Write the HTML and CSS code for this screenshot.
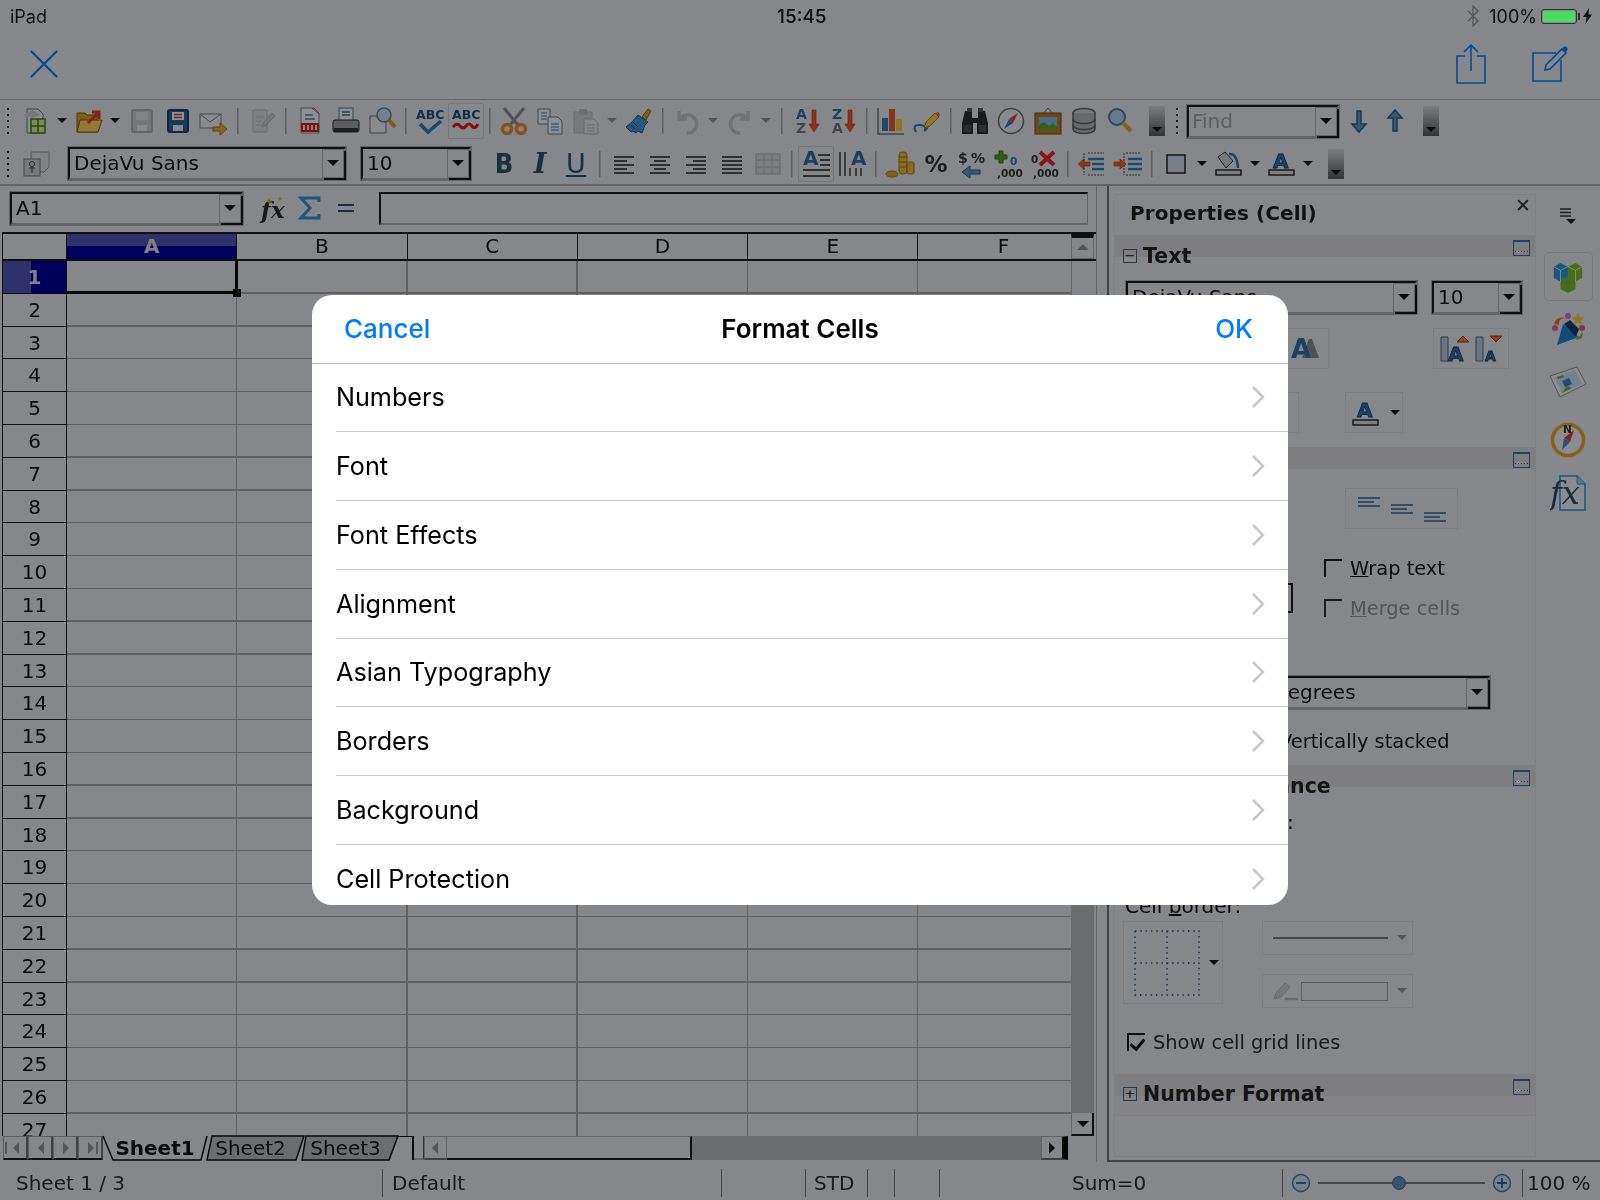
FILE: index.html
```html
<!DOCTYPE html>
<html lang="en">
<head>
    <meta name="viewport" content="width=device-width, initial-scale=1.0">
    <title>Format Cells</title>
    <link rel="stylesheet" href="styles.css">
</head>
<body>
    <header class="statusBar">
        <span class="device">iPad</span>
        <span class="clock">15:45</span>
        <div class="sysTray">
            <svg class="bluetooth" width="14" height="22" viewBox="0 0 14 22"><path d="M2 6l10 10-5 5V1l5 5L2 16" fill="none" stroke="#555" stroke-width="1.3"/></svg>
            <span>100%</span>
            <span class="battery"><i></i></span>
            <svg class="bolt" width="9" height="16" viewBox="0 0 9 16"><path d="M6 0L0 9h3.500L2.500 16 9 6.500H5.500z" fill="#111"/></svg>
        </div>
    </header>

    <nav class="navBar">
        <svg width="28" height="28" viewBox="0 0 28 28"><path d="M1 1l26 26M27 1L1 27" stroke="#007aff" stroke-width="2" fill="none"/></svg>
        <div class="navRight">
            <svg width="30" height="40" viewBox="0 0 30 40"><path d="M9 12H1v27h28V12h-8M15 27V1M8 8l7-7 7 7" stroke="#007aff" stroke-width="1.600" fill="none"/></svg>
            <svg width="36" height="36" viewBox="0 0 36 36"><path d="M24 7H1v28h28V14" stroke="#007aff" stroke-width="1.600" fill="none"/><path d="M13 24l1-5L30 3l4 4-16 16z" stroke="#007aff" stroke-width="1.600" fill="none"/><circle cx="33" cy="3" r="2.500" fill="#007aff"/></svg>
        </div>
    </nav>

    <div class="office">
        <div class="toolbar rowOne">
            <span class="grip"></span>
            <svg class="tb" viewBox="0 0 28 28"><path d="M5 2h11l5 5v19H5z" fill="#e8eaef" stroke="#6d6f75"/><path d="M1 8l9-5 9 5-9 3z" fill="#c5c8d0"/><rect x="9" y="12" width="14" height="14" fill="#dde78c" stroke="#3b7d1c" stroke-width="1.500"/><path d="M16 12v14M9 19h14" stroke="#3b7d1c" stroke-width="1.500"/></svg>
            <i class="dd"></i>
            <svg class="tb" viewBox="0 0 28 28"><path d="M2 25V6h8l2 2h10v17z" fill="#d89a2e" stroke="#84540c"/><path d="M2 25l3-12h22l-4 12z" fill="#f5c95c" stroke="#84540c"/><path d="M13 16L23 6m-6-1h7v7" fill="none" stroke="#d03c18" stroke-width="3"/></svg>
            <i class="dd"></i>
            <svg class="tb" viewBox="0 0 28 28"><rect x="4" y="3" width="20" height="22" rx="2" fill="#c4c5cb" stroke="#a8a9af" stroke-width="2"/><rect x="8" y="5" width="12" height="8" fill="#d9dae0"/><rect x="9" y="18" width="10" height="6" fill="#e3e4ea"/></svg>
            <svg class="tb" viewBox="0 0 28 28"><rect x="4" y="3" width="20" height="22" rx="2" fill="#2c6296" stroke="#18406c" stroke-width="2"/><rect x="8" y="5" width="12" height="8" fill="#eef"/><path d="M10 7.500h8M10 10.500h8" stroke="#d13a3a" stroke-width="1.500"/><rect x="9" y="18" width="10" height="6" fill="#dfe4ec"/></svg>
            <svg class="tb" viewBox="0 0 28 28"><rect x="0" y="7" width="21" height="14" fill="#e4e6ec" stroke="#777a80"/><path d="M0 7l10 8 11-8" fill="none" stroke="#777a80"/><path d="M13 20h7v-4l7 6-7 6v-4h-7z" fill="#eda62c" stroke="#a86a10"/></svg>
            <i class="sep"></i>
            <svg class="tb" viewBox="0 0 28 28"><path d="M5 3h14v22H5z" fill="#d5d6dc" stroke="#aeb0b6"/><path d="M8 10h8M8 14h6M8 18h6" stroke="#b5b6bc"/><path d="M14 20l2-5 8-9 3 3-9 9z" fill="#c7c8ce" stroke="#a8a9af"/></svg>
            <i class="sep"></i>
            <svg class="tb" viewBox="0 0 28 28"><path d="M5 1h13l5 5v20H5z" fill="#eceef3" stroke="#7e8086"/><path d="M9 8h8M9 12h10" stroke="#3779b4" stroke-width="1.500"/><path d="M16 1l7 6" stroke="#d33"/><rect x="5" y="16" width="18" height="9" fill="#cf1e1e"/><path d="M8 18v5M12 18v5M16 18v5M20 18v5" stroke="#f3d5d5" stroke-width="2"/></svg>
            <svg class="tb" viewBox="0 0 28 28"><rect x="7" y="1" width="14" height="13" fill="#eef0f5" stroke="#6f7177"/><path d="M10 5h8M10 8h8" stroke="#2f6fa8" stroke-width="1.500"/><rect x="1" y="13" width="26" height="12" rx="2" fill="#9a9ba1" stroke="#2a2b30"/><rect x="2" y="21" width="24" height="4" fill="#303136"/><circle cx="22" cy="18" r="1.500" fill="#5ec04a"/></svg>
            <svg class="tb" viewBox="0 0 28 28"><path d="M2 9h16v17H2z" fill="#e4e6ec" stroke="#6f7177"/><circle cx="16" cy="8" r="7" fill="#bdd8ee" stroke="#71777f" stroke-width="1.500"/><path d="M21 13l6 7" stroke="#d09a24" stroke-width="4"/></svg>
            <i class="sep"></i>
            <svg class="tb" viewBox="0 0 28 28"><text x="0" y="12" class="svgAbc" fill="#1d4f80">ABC</text><path d="M4 17l8 8 13-11" fill="none" stroke="#2d78b8" stroke-width="3.500"/></svg>
            <span class="toggled"><svg class="tb" viewBox="0 0 28 28"><text x="0" y="12" class="svgAbc" fill="#1d4f80">ABC</text><path d="M1 20q4-5 7-1t6 0 6 0 6-2" fill="none" stroke="#d01c1c" stroke-width="3"/></svg></span>
            <i class="sep"></i>
            <svg class="tb" viewBox="0 0 28 28"><path d="M4 1l14 17M24 1L10 18" stroke="#85878d" stroke-width="3"/><circle cx="7" cy="22" r="4.500" fill="none" stroke="#e1892c" stroke-width="3.500"/><circle cx="21" cy="22" r="4.500" fill="none" stroke="#e1892c" stroke-width="3.500"/></svg>
            <svg class="tb" viewBox="0 0 28 28"><path d="M2 2h12v15H2z" fill="#eef0f5" stroke="#74767c"/><path d="M5 6h6M5 9h6M5 12h6" stroke="#2f78b5"/><path d="M12 10h10l4 4v13H12z" fill="#eef0f5" stroke="#74767c"/><path d="M15 17h8M15 20h8M15 23h8" stroke="#2f78b5"/></svg>
            <svg class="tb" viewBox="0 0 28 28"><rect x="2" y="5" width="18" height="21" fill="#c9cacf" stroke="#aeafb5"/><rect x="7" y="2" width="8" height="6" fill="#b7b8be"/><path d="M12 12h10l4 4v11H12z" fill="#dfe0e5" stroke="#aeafb5"/><path d="M15 18h8M15 21h8M15 24h8" stroke="#b3b4ba"/></svg>
            <i class="dd grey"></i>
            <svg class="tb" viewBox="0 0 28 28"><path d="M17 10l6-8 3 2-5 9z" fill="#d39a24" stroke="#8a6210"/><path d="M13 8l10 7-3 3-3 8-4-2-2 2-3-2-2 1-5-5 6-5z" fill="#3d8fd3" stroke="#1f5a90"/><path d="M8 15l5 5M6 18l4 4" stroke="#1f5a90"/></svg>
            <i class="sep"></i>
            <svg class="tb" viewBox="0 0 28 28"><path d="M6 4v8h8M7 12A9 9 0 1 1 14 26" fill="none" stroke="#bdbec4" stroke-width="3.500"/></svg>
            <i class="dd grey"></i>
            <svg class="tb" viewBox="0 0 28 28"><path d="M22 4v8h-8M21 12A9 9 0 1 0 14 26" fill="none" stroke="#bdbec4" stroke-width="3.500"/></svg>
            <i class="dd grey"></i>
            <i class="sep wide"></i>
            <svg class="tb" viewBox="0 0 28 28"><text x="3" y="12" class="svgLetter" fill="#2c6fb0">A</text><text x="3" y="26" class="svgLetter" fill="#73757b">Z</text><path d="M19 3v14h-3l5 8 5-8h-3V3z" fill="#e4572a" stroke="#a83410" stroke-width=".6"/></svg>
            <svg class="tb" viewBox="0 0 28 28"><text x="3" y="12" class="svgLetter" fill="#2c6fb0">Z</text><text x="3" y="26" class="svgLetter" fill="#73757b">A</text><path d="M19 3v14h-3l5 8 5-8h-3V3z" fill="#e4572a" stroke="#a83410" stroke-width=".6"/></svg>
            <i class="sep"></i>
            <svg class="tb" viewBox="0 0 28 28"><path d="M1 1v26h26" fill="none" stroke="#6f7177" stroke-width="1.500"/><rect x="5" y="11" width="6" height="13" fill="#2f78b5"/><rect x="12" y="2" width="6" height="22" fill="#dc5a22"/><rect x="19" y="12" width="6" height="12" fill="#ecc23a"/></svg>
            <svg class="tb" viewBox="0 0 28 28"><path d="M3 25q-4-7 3-7t6 4 3-2" fill="none" stroke="#2f78b5" stroke-width="2"/><path d="M11 21l2-6 9-9 4 4-9 9z" fill="#f0c840" stroke="#9a7a14"/><path d="M22 6l4 4 1-3-2-2z" fill="#e56a5a"/></svg>
            <i class="sep"></i>
            <svg class="tb" viewBox="0 0 28 28"><path d="M4 4h7v7h6V4h7l3 12v11H16V16h-4v11H1V16z" fill="#2c2d32"/><rect x="6" y="1" width="5" height="4" fill="#55565c"/><rect x="17" y="1" width="5" height="4" fill="#55565c"/><rect x="3" y="18" width="7" height="7" fill="#4b4c52"/><rect x="18" y="18" width="7" height="7" fill="#4b4c52"/></svg>
            <svg class="tb" viewBox="0 0 28 28"><circle cx="14" cy="14" r="12.500" fill="#e5e7ec" stroke="#686a70" stroke-width="1.500"/><path d="M21 6l-5 10-4-4z" fill="#d83a2e"/><path d="M7 22l5-10 4 4z" fill="#2f78c8"/></svg>
            <svg class="tb wideIcon" viewBox="0 0 28 28"><path d="M9 7l5-6 5 6" fill="none" stroke="#6b6d73"/><rect x="1" y="6" width="26" height="21" fill="#b27a1e" stroke="#6e470c"/><rect x="5" y="10" width="18" height="13" fill="#7cb4e4"/><path d="M5 23v-5l5-3 5 4 4-3 4 4v3z" fill="#5e9c32"/></svg>
            <svg class="tb" viewBox="0 0 28 28"><ellipse cx="14" cy="6" rx="11" ry="4.500" fill="#c9cad0" stroke="#5f6066" stroke-width="1.500"/><path d="M3 6v16c0 6 22 6 22 0V6" fill="#aeafb5" stroke="#5f6066" stroke-width="1.500"/><path d="M3 12c0 6 22 6 22 0M3 18c0 6 22 6 22 0" fill="none" stroke="#5f6066" stroke-width="1.500"/></svg>
            <svg class="tb" viewBox="0 0 28 28"><circle cx="11" cy="10" r="8" fill="#a9cde9" stroke="#5a7792" stroke-width="2"/><path d="M17 16l8 8" stroke="#d8a12a" stroke-width="4.500"/></svg>
            <span class="overflow"></span>
            <span class="grip inRow"></span>
            <div class="combo findBox"><span class="comboText muted">Find</span><b class="comboBtn"></b></div>
            <svg class="tb" viewBox="0 0 28 28"><path d="M12 4h4v13h5l-7 8-7-8h5z" fill="#5a94c8" stroke="#2c5c88" stroke-width="1.500"/></svg>
            <svg class="tb" viewBox="0 0 28 28"><path d="M12 24h4V11h5l-7-8-7 8h5z" fill="#5a94c8" stroke="#2c5c88" stroke-width="1.500"/></svg>
            <span class="overflow last"></span>
        </div>

        <div class="toolbar rowTwo">
            <span class="grip"></span>
            <svg class="tb" viewBox="0 0 28 28"><path d="M9 2h18v15l-5 5H9z" fill="#d9dae0" stroke="#8e9096"/><rect x="2" y="9" width="16" height="17" fill="#c9cad0" stroke="#6f7177"/><circle cx="10" cy="14" r="2.500" fill="none" stroke="#444"/><path d="M10 16v7M7 18h6" stroke="#444"/></svg>
            <div class="combo fontBox"><span class="comboText">DejaVu Sans</span><b class="comboBtn"></b></div>
            <div class="combo sizeBox"><span class="comboText">10</span><b class="comboBtn"></b></div>
            <span class="fmt bold">B</span>
            <span class="fmt ital">I</span>
            <span class="fmt under">U</span>
            <i class="sep"></i>
            <svg class="tb" viewBox="0 0 28 28"><path d="M4 7h20M4 11h13M4 15h20M4 19h13M4 23h20" stroke="#222" stroke-width="1.600"/></svg>
            <svg class="tb" viewBox="0 0 28 28"><path d="M4 7h20M8 11h12M4 15h20M8 19h12M4 23h20" stroke="#222" stroke-width="1.600"/></svg>
            <svg class="tb" viewBox="0 0 28 28"><path d="M4 7h20M11 11h13M4 15h20M11 19h13M4 23h20" stroke="#222" stroke-width="1.600"/></svg>
            <svg class="tb" viewBox="0 0 28 28"><path d="M4 7h20M4 11h20M4 15h20M4 19h20M4 23h20" stroke="#222" stroke-width="1.600"/></svg>
            <svg class="tb" viewBox="0 0 28 28"><path d="M2 4h24v20H2zM2 10h24M2 17h24M10 4v20M18 4v20" fill="#d3d4da" stroke="#b8b9bf" stroke-width="1.300"/></svg>
            <i class="sep"></i>
            <span class="toggled"><svg class="tb" viewBox="0 0 28 28"><text x="1" y="15" class="svgLetter big" fill="#2d6ca6">A</text><path d="M16 5h12M18 10h10M18 15h10M1 20h27M1 26h27" stroke="#222" stroke-width="1.300"/></svg></span>
            <svg class="tb" viewBox="0 0 28 28"><text x="13" y="15" class="svgLetter big" fill="#2d6ca6">A</text><path d="M2 2v24M7 2v24M12 18v8M18 18v8M23 18v8" stroke="#222" stroke-width="1.300"/></svg>
            <i class="sep"></i>
            <svg class="tb" viewBox="0 0 28 28"><rect x="13" y="2" width="8" height="22" rx="3" fill="#e5b23a" stroke="#9c7212"/><rect x="21" y="12" width="7" height="12" rx="2" fill="#e5b23a" stroke="#9c7212"/><ellipse cx="6" cy="24" rx="6" ry="3" fill="#d9a02c" stroke="#9c7212"/><path d="M13 7h8M13 12h8M13 17h8" stroke="#9c7212"/></svg>
            <span class="fmt percent">%</span>
            <svg class="tb" viewBox="0 0 28 28"><text x="0" y="13" class="svgLetter" fill="#333">$</text><text x="13" y="13" class="svgLetter" fill="#333">%</text><path d="M4 22l8-6v4h10v4H12v4z" fill="#5a94c8" stroke="#2c5c88"/></svg>
            <svg class="tb" viewBox="0 0 28 28"><path d="M5 1h4v4h4v4H9v4H5V9H1V5h4z" fill="#4fa12a" stroke="#2d6c10"/><text x="16" y="15" class="svgSmall" fill="#2f6fc0">0</text><text x="3" y="27" class="svgSmall" fill="#333">,000</text></svg>
            <svg class="tb" viewBox="0 0 28 28"><text x="1" y="13" class="svgSmall" fill="#333">0</text><path d="M10 2l14 13M24 2L10 15" stroke="#e0262a" stroke-width="4"/><text x="3" y="27" class="svgSmall" fill="#333">,000</text></svg>
            <i class="sep"></i>
            <svg class="tb" viewBox="0 0 28 28"><path d="M10 9h16M14 14h12M14 19h12" stroke="#2f78b5" stroke-width="2.500"/><path d="M6 3v22M10 3h16M10 25h16" stroke="#444" stroke-dasharray="2 1" fill="none"/><path d="M0 14l6-5v3h6v4H6v3z" fill="#e2622a" stroke="#a83410" stroke-width=".6"/></svg>
            <svg class="tb" viewBox="0 0 28 28"><path d="M14 9h14M14 14h14M14 19h14" stroke="#2f78b5" stroke-width="2.500"/><path d="M10 3v22M12 3h14M12 25h14" stroke="#444" stroke-dasharray="2 1" fill="none"/><path d="M12 14l-6-5v3H0v4h6v3z" fill="#e2622a" stroke="#a83410" stroke-width=".6"/></svg>
            <i class="sep"></i>
            <svg class="tb" viewBox="0 0 28 28"><rect x="5" y="5" width="18" height="18" fill="#cbd2e0" stroke="#222" stroke-width="1.500"/></svg>
            <i class="dd"></i>
            <svg class="tb" viewBox="0 0 28 28"><path d="M3 7l7-5 8 9-7 7z" fill="#c9cad0" stroke="#333"/><path d="M14 4q8-1 9 14" fill="none" stroke="#2c6fb0" stroke-width="2.500"/><rect x="1" y="20" width="25" height="5" fill="#d5d6dc" stroke="#111" stroke-width="1.300"/></svg>
            <i class="dd"></i>
            <svg class="tb" viewBox="0 0 28 28"><text x="5" y="18" class="svgLetter big" fill="#2c6fb0" stroke="#173e66" stroke-width=".8">A</text><rect x="1" y="20" width="25" height="5" fill="#d5d6dc" stroke="#111" stroke-width="1.300"/></svg>
            <i class="dd"></i>
            <span class="overflow"></span>
        </div>

        <div class="workspace">
            <div class="leftPane">
                <div class="formulaBar">
                    <div class="combo nameBox"><span class="comboText">A1</span><b class="comboBtn"></b></div>
                    <svg class="tb" viewBox="0 0 28 28"><text x="1" y="24" class="svgFx" fill="#2b2b2b">fx</text><path d="M9 4l1 2 2 1-2 1-1 2-1-2-2-1 2-1zM20 2l1 2 2 .500-2 1-1 2-1-2-2-1 2-.500z" fill="#e0b020"/></svg>
                    <svg class="tb" viewBox="0 0 28 28"><path d="M23 8V4H5l9 10-9 10h18v-4" fill="none" stroke="#2f8fc8" stroke-width="3"/></svg>
                    <svg class="tb" viewBox="0 0 28 28"><path d="M6 11h16M6 17h16" stroke="#2c4e6e" stroke-width="2.200"/></svg>
                    <div class="formulaInput"></div>
                </div>

                <div class="sheet">
                    <div class="colHeads">
                        <div class="corner"></div>
                        <div class="colHead picked">A</div>
                        <div class="colHead">B</div>
                        <div class="colHead">C</div>
                        <div class="colHead">D</div>
                        <div class="colHead">E</div>
                        <div class="colHead lastCol">F</div>
                        <div class="scrollUp"><i class="arrow up"></i></div>
                    </div>
                    <div class="sheetBody">
                        <div class="rowHeads">
                            <div class="rowHead picked">1</div><div class="rowHead">2</div><div class="rowHead">3</div>
                            <div class="rowHead">4</div><div class="rowHead">5</div><div class="rowHead">6</div>
                            <div class="rowHead">7</div><div class="rowHead">8</div><div class="rowHead">9</div>
                            <div class="rowHead">10</div><div class="rowHead">11</div><div class="rowHead">12</div>
                            <div class="rowHead">13</div><div class="rowHead">14</div><div class="rowHead">15</div>
                            <div class="rowHead">16</div><div class="rowHead">17</div><div class="rowHead">18</div>
                            <div class="rowHead">19</div><div class="rowHead">20</div><div class="rowHead">21</div>
                            <div class="rowHead">22</div><div class="rowHead">23</div><div class="rowHead">24</div>
                            <div class="rowHead">25</div><div class="rowHead">26</div><div class="rowHead">27</div>
                        </div>
                        <div class="cells"><div class="cursor"><i></i></div></div>
                        <div class="vScroll">
                            <div class="vThumb"></div>
                            <div class="vDown"><i class="arrow down"></i></div>
                        </div>
                    </div>
                    <div class="sheetFoot">
                        <div class="tabNav">
                            <span><i class="arrow left barred"></i></span>
                            <span><i class="arrow left"></i></span>
                            <span><i class="arrow right"></i></span>
                            <span><i class="arrow right barred"></i></span>
                        </div>
                        <div class="tab current">
                            <svg viewBox="0 0 104 24" preserveAspectRatio="none"><path d="M0 0l10 24h88l6-24" fill="none" stroke="#111" stroke-width="1.500"/></svg>
                            <span>Sheet1</span>
                        </div>
                        <div class="tab">
                            <svg viewBox="0 0 95 24" preserveAspectRatio="none"><path d="M0 24L5 0h92l-8 24z" fill="#b5b6bc" stroke="#111" stroke-width="1.500"/></svg>
                            <span>Sheet2</span>
                        </div>
                        <div class="tab">
                            <svg viewBox="0 0 95 24" preserveAspectRatio="none"><path d="M0 24L4 0h92l-9 24z" fill="#b5b6bc" stroke="#111" stroke-width="1.500"/></svg>
                            <span>Sheet3</span>
                        </div>
                        <div class="tabRest"></div>
                        <div class="splitter"></div>
                        <div class="hBtn"><i class="arrow left"></i></div>
                        <div class="hThumb"></div>
                        <div class="hTrack"></div>
                        <div class="hBtn end"><i class="arrow right dark"></i></div>
                    </div>
                </div>
            </div>

            <aside class="sidebar">
                <div class="deck">
                    <div class="deckTitle">Properties (Cell)<span class="deckClose">&#10005;</span></div>

                    <div class="secHead"><i class="fold">&minus;</i>Text<i class="more"></i></div>
                    <div class="panelRow fontRow">
                        <div class="combo sideFont"><span class="comboText">DejaVu Sans</span><b class="comboBtn"></b></div>
                        <div class="combo sideSize"><span class="comboText">10</span><b class="comboBtn"></b></div>
                    </div>
                    <div class="panelRow aaRow">
                        <div class="btnBox aaBox">
                            <svg width="36" height="32" viewBox="0 0 36 32"><path d="M16 25l7-19h3l7 19z" fill="#85878d"/><text x="5" y="25" class="svgAa" fill="#2d6ca6">A</text></svg>
                        </div>
                        <div class="btnBox growBox">
                            <svg width="30" height="30" viewBox="0 0 30 30"><path d="M1 3h7v24H1z" fill="#b5c3d2" stroke="#47678a"/><text x="8" y="27" class="svgLetter big" fill="#2d6ca6" stroke="#173e66" stroke-width=".8">A</text><path d="M17 8l6-6 6 6z" fill="#e2822a" stroke="#a83410"/></svg>
                            <svg width="28" height="30" viewBox="0 0 28 30"><path d="M1 3h7v24H1z" fill="#b5c3d2" stroke="#47678a"/><text x="10" y="27" class="svgLetter" fill="#2d6ca6" stroke="#173e66" stroke-width=".8">A</text><path d="M15 2l6 6 6-6z" fill="#e2622a" stroke="#a83410"/></svg>
                        </div>
                    </div>
                    <div class="panelRow colorRow">
                        <div class="btnBox stubBox"></div>
                        <div class="btnBox fontColorBox">
                            <svg width="28" height="32" viewBox="0 0 28 32"><text x="5" y="20" class="svgLetter big" fill="#2c6fb0" stroke="#173e66" stroke-width=".8">A</text><rect x="1" y="23" width="25" height="5" fill="#d5d6dc" stroke="#111" stroke-width="1.300"/></svg>
                            <i class="dd"></i>
                        </div>
                    </div>

                    <div class="secHead short"><i class="fold">&minus;</i>Alignment<i class="more"></i></div>
                    <div class="panelRow valignRow">
                        <div class="btnBox valignBox">
                            <svg width="24" height="30" viewBox="0 0 24 30"><path d="M1 4h22M1 8h16M1 12h22" stroke="#2f5f92" stroke-width="1.300"/></svg>
                            <svg width="24" height="30" viewBox="0 0 24 30"><path d="M1 11h22M1 15h16M1 19h22" stroke="#2f5f92" stroke-width="1.300"/></svg>
                            <svg width="24" height="30" viewBox="0 0 24 30"><path d="M1 19h22M1 23h16M1 27h22" stroke="#2f5f92" stroke-width="1.300"/></svg>
                        </div>
                    </div>
                    <div class="alignMid">
                        <div class="indentEdge"></div>
                        <div class="checks">
                            <label class="check"><i class="cb"></i><span><u>W</u>rap text</span></label>
                            <label class="check off"><i class="cb"></i><span><u>M</u>erge cells</span></label>
                        </div>
                    </div>
                    <div class="combo degreeBox"><span class="comboText">0 degrees</span><b class="comboBtn"></b></div>
                    <div class="stacked">Vertically stacked</div>

                    <div class="secHead appearance"><i class="fold">&minus;</i>Cell Appearance<i class="more"></i></div>
                    <div class="plainLabel bgLabel">Cell background:</div>
                    <div class="plainLabel borderLabel">Cell <u>b</u>order:</div>
                    <div class="borderRow">
                        <div class="btnBox gridBox">
                            <svg width="66" height="66" viewBox="0 0 66 66"><path d="M1 1h64v64H1zM33 1v64M1 33h64" fill="none" stroke="#2f4f78" stroke-width="1.500" stroke-dasharray="1.500 3.800"/></svg>
                            <i class="dd"></i>
                        </div>
                        <div class="borderTools">
                            <div class="btnBox toolBox"><span class="lineSample"></span><i class="dd grey"></i></div>
                            <div class="btnBox toolBox">
                                <svg width="26" height="20" viewBox="0 0 26 20"><path d="M1 18l2-6 9-10 5 4-9 10z" fill="#c7c8ce" stroke="#aeafb5"/><path d="M12 18h13" stroke="#b0b1b7" stroke-width="2.500"/></svg>
                                <span class="colorSample"></span><i class="dd grey"></i>
                            </div>
                        </div>
                    </div>
                    <label class="check gridCheck"><i class="cb on"></i><span>Show cell <u>g</u>rid lines</span></label>

                    <div class="secHead last"><i class="fold">+</i>Number Format<i class="more"></i></div>
                </div>

                <div class="sideTabs">
                    <svg class="sideMenu" width="16" height="16" viewBox="0 0 16 16"><path d="M0 1h11M0 4.500h11M0 8h11" stroke="#333" stroke-width="1.300"/><path d="M6 11h10l-5 5z" fill="#222"/></svg>
                    <div class="sideTab picked">
                        <svg width="32" height="34" viewBox="0 0 34 34"><path d="M2 6l7-4 8 4v12l-8 4-7-4z" fill="#2893d4"/><path d="M17 6l8-4 7 4v12l-7 4-8-4z" fill="#75b82c"/><path d="M9 20l8-3 8 3v10l-8 4-8-4z" fill="#75b82c"/><path d="M2 6l7 4 8-4M17 6l8 4 7-4M9 10v12M25 10v12" stroke="#e6e8ee" fill="none"/></svg>
                    </div>
                    <div class="sideTab">
                        <svg width="36" height="36" viewBox="0 0 36 36"><path d="M7 33L13 12l16 13z" fill="#1e7fd0"/><path d="M14 12l12 13 3-8-9-9z" fill="#123c64"/><path d="M4 12q2-8 12-6-8 0-7 7z" fill="#d97a1c"/><path d="M27 28q8-2 5-9-1 7-7 6z" fill="#74b82c"/><circle cx="5" cy="16" r="3" fill="#df58a8"/><circle cx="18" cy="4" r="3" fill="#c065d8"/><circle cx="32" cy="16" r="3" fill="#df5878"/><path d="M28 1l2 4 4 .500-3 3 1 4-4-2-4 2 1-4-3-3 4-.500z" fill="#efc53c"/></svg>
                    </div>
                    <div class="sideTab">
                        <svg width="38" height="34" viewBox="0 0 38 34"><path d="M1 10L28 1l9 17-26 13z" fill="#e9ebf0" stroke="#8a8c92"/><path d="M6 11l20-7 7 14-20 9z" fill="#c3d8ea"/><path d="M13 27l5-7 5 2 10-5z" fill="#6aa838"/><path d="M13 15l7-3 3 6-7 3z" fill="#3a7db8"/><path d="M8 11l6-2 1 2-6 2z" fill="#6aa838"/></svg>
                    </div>
                    <div class="sideTab compass">
                        <svg width="36" height="36" viewBox="0 0 36 36"><circle cx="18" cy="18" r="15.500" fill="#e8eaef" stroke="#e2a02a" stroke-width="3.500"/><path d="M24 8l-4 12-6-4z" fill="#d83a2e"/><path d="M12 28l2-12 6 4z" fill="#3d84d0"/><text x="13" y="11" class="svgSmall" fill="#333">N</text></svg>
                    </div>
                    <div class="sideTab">
                        <svg width="36" height="36" viewBox="0 0 36 36"><path d="M10 1h17l8 8v26H10z" fill="#e8eaef" stroke="#2893d4" stroke-width="1.500"/><path d="M27 1v8h8" fill="#9ac9e8" stroke="#2893d4"/><text x="0" y="29" class="svgFxBig" fill="#2a4a68">fx</text></svg>
                    </div>
                </div>
            </aside>
        </div>

        <footer class="bottomBar">
            <span class="cellA">Sheet 1 / 3</span>
            <span class="cellB">Default</span>
            <span class="cellC"></span>
            <span class="cellD">STD</span>
            <span class="cellE"></span>
            <span class="cellF"></span>
            <span class="cellG">Sum=0</span>
            <span class="cellH">
                <svg width="22" height="22" viewBox="0 0 22 22"><circle cx="11" cy="11" r="8.500" fill="#c8d6e6" stroke="#3d7ab0" stroke-width="1.500"/><path d="M6 11h10" stroke="#2b5f90" stroke-width="1.800"/></svg>
                <span class="zoomTrack"><i></i></span>
                <svg width="22" height="22" viewBox="0 0 22 22"><circle cx="11" cy="11" r="8.500" fill="#c8d6e6" stroke="#3d7ab0" stroke-width="1.500"/><path d="M6 11h10M11 6v10" stroke="#2b5f90" stroke-width="1.800"/></svg>
            </span>
            <span class="cellI">100 %</span>
        </footer>
    </div>

    <div class="dimmer">
        <section class="dialog">
            <div class="dialogHead">
                <span class="action">Cancel</span>
                <span class="dialogTitle">Format Cells</span>
                <span class="action strong">OK</span>
            </div>
            <ul class="menu">
                <li>Numbers<svg viewBox="0 0 14 22"><path d="M2 1l10 10L2 21" fill="none" stroke="#c7c7cc" stroke-width="2.500"/></svg></li>
                <li>Font<svg viewBox="0 0 14 22"><path d="M2 1l10 10L2 21" fill="none" stroke="#c7c7cc" stroke-width="2.500"/></svg></li>
                <li>Font Effects<svg viewBox="0 0 14 22"><path d="M2 1l10 10L2 21" fill="none" stroke="#c7c7cc" stroke-width="2.500"/></svg></li>
                <li>Alignment<svg viewBox="0 0 14 22"><path d="M2 1l10 10L2 21" fill="none" stroke="#c7c7cc" stroke-width="2.500"/></svg></li>
                <li>Asian Typography<svg viewBox="0 0 14 22"><path d="M2 1l10 10L2 21" fill="none" stroke="#c7c7cc" stroke-width="2.500"/></svg></li>
                <li>Borders<svg viewBox="0 0 14 22"><path d="M2 1l10 10L2 21" fill="none" stroke="#c7c7cc" stroke-width="2.500"/></svg></li>
                <li>Background<svg viewBox="0 0 14 22"><path d="M2 1l10 10L2 21" fill="none" stroke="#c7c7cc" stroke-width="2.500"/></svg></li>
                <li>Cell Protection<svg viewBox="0 0 14 22"><path d="M2 1l10 10L2 21" fill="none" stroke="#c7c7cc" stroke-width="2.500"/></svg></li>
            </ul>
        </section>
    </div>
</body>
</html>
```

FILE: styles.css
```css
* {
    box-sizing: border-box;
}
body {
    margin: 0;
    width: 1600px;
    height: 1200px;
    overflow: hidden;
    background-color: #dfe1e7;
    font-family: "DejaVu Sans", sans-serif;
    font-size: 20px;
    color: #111;
}

/* ios chrome */
.statusBar {
    position: relative;
    z-index: 3;
    height: 32px;
    display: flex;
    align-items: center;
    padding: 0 8px 0 10px;
    font-family: Inter, sans-serif;
    font-size: 18px;
    color: #0c0c0c;
}
.clock {
    position: absolute;
    left: 777px;
    font-weight: 500;
    font-size: 19px;
}
.sysTray {
    margin-left: auto;
    display: flex;
    align-items: center;
    gap: 7px;
}
.bluetooth {
    margin-right: 2px;
}
.battery {
    width: 36px;
    height: 15px;
    margin-left: -3px;
    padding: 1px;
    border: 1px solid #333;
    border-radius: 3px;
    position: relative;
}
.battery i {
    display: block;
    height: 100%;
    background-color: #4cd964;
    border-radius: 1px;
}
.battery::after {
    content: "";
    position: absolute;
    right: -4px;
    top: 3px;
    width: 2px;
    height: 7px;
    background-color: #333;
}
.bolt {
    margin-left: -1px;
}
.navBar {
    height: 68px;
    display: flex;
    align-items: center;
    padding: 0 32px 4px 30px;
    border-bottom: 1px solid #a8a9ae;
}
.navRight {
    margin-left: auto;
    display: flex;
    align-items: center;
    gap: 46px;
}

/* libreoffice window */
.office {
    filter: blur(0.6px);
}
.toolbar {
    display: flex;
    align-items: center;
    padding-left: 5px;
}
.rowOne {
    height: 42px;
}
.rowTwo {
    height: 44px;
    padding-top: 1px;
    border-bottom: 2px solid #a8a9ae;
}
.tb {
    width: 36px;
    height: 28px;
    flex: none;
    overflow: visible;
}
.wideIcon {
    margin-left: 1px;
}
.grip {
    width: 13px;
    height: 30px;
    flex: none;
    background-image: radial-gradient(circle, #222 1px, transparent 1.4px);
    background-size: 6px 6px;
    background-position: 0 0;
    background-repeat: repeat-y;
}
.grip.inRow {
    margin-left: 9px;
}
.dd {
    width: 17px;
    flex: none;
    height: 0;
    position: relative;
}
.dd::before {
    content: "";
    position: absolute;
    left: 3px;
    top: -3px;
    border-left: 5px solid transparent;
    border-right: 5px solid transparent;
    border-top: 5px solid #111;
}
.dd.grey::before {
    border-top-color: #8d8e94;
}
.sep {
    width: 12px;
    height: 26px;
    flex: none;
    background: linear-gradient(#9c9da2, #9c9da2) center / 1.5px 100% no-repeat;
}
.sep.wide {
    width: 14px;
}
.toggled {
    display: flex;
    flex: none;
    align-items: center;
    width: 36px;
    height: 36px;
    border: 1.5px solid #c3c4ca;
    border-radius: 2px;
    justify-content: center;
}
.overflow {
    width: 16px;
    height: 30px;
    flex: none;
    margin-left: 11px;
    position: relative;
    background: linear-gradient(#d0d1d7, #55565b);
}
.overflow::after {
    content: "";
    position: absolute;
    left: 3px;
    bottom: 4px;
    border-left: 5px solid transparent;
    border-right: 5px solid transparent;
    border-top: 5px solid #111;
}
.overflow.last {
    margin-left: 10px;
}
.svgAbc {
    font: bold 12.5px "DejaVu Sans", sans-serif;
}
.svgLetter {
    font: bold 14px "DejaVu Sans", sans-serif;
}
.svgLetter.big {
    font-size: 20px;
}
.svgSmall {
    font: bold 10.5px "DejaVu Sans", sans-serif;
}
.svgFx {
    font: italic bold 23px "DejaVu Serif", serif;
}
.svgFxBig {
    font: italic 32px "DejaVu Serif", serif;
}
.svgAa {
    font: bold 26px "DejaVu Sans", sans-serif;
}
.fmt {
    width: 36px;
    flex: none;
    text-align: center;
    color: #28506f;
}
.fmt.bold {
    font: bold 27px "DejaVu Sans Condensed", "DejaVu Sans", sans-serif;
    margin-left: 15px;
}
.fmt.ital {
    font: italic bold 27px "DejaVu Serif", serif;
}
.fmt.under {
    font-size: 27px;
    text-decoration: underline;
    text-underline-offset: 2px;
    color: #28506f;
}
.fmt.percent {
    font-size: 23px;
    font-weight: bold;
    color: #333;
}

/* combo boxes */
.combo {
    display: flex;
    flex: none;
    height: 33px;
    border-top: 2px solid #1a1a1a;
    border-left: 2px solid #1a1a1a;
    border-right: 2px solid #a6a7ac;
    border-bottom: 2px solid #a6a7ac;
    outline: 1px solid #a6a7ac;
    position: relative;
}
.comboText {
    flex: 1;
    padding-left: 4px;
    line-height: 29px;
    white-space: nowrap;
    overflow: hidden;
}
.muted {
    color: #9a9ba0;
}
.comboBtn {
    width: 22px;
    flex: none;
    position: relative;
    border: 1px solid #a6a7ac;
    box-shadow: 2px 2px 0 #1a1a1a;
}
.comboBtn::after {
    content: "";
    position: absolute;
    left: 4px;
    top: 10px;
    border-left: 6px solid transparent;
    border-right: 6px solid transparent;
    border-top: 6px solid #111;
}
.findBox {
    width: 152px;
    margin-right: 2px;
}
.findBox .comboText {
    padding-left: 3px;
}
.fontBox {
    width: 278px;
    margin-left: 14px;
}
.sizeBox {
    width: 110px;
    margin-left: 15px;
}

/* main area */
.workspace {
    height: 976px;
    display: flex;
}
.leftPane {
    width: 1097px;
    flex: none;
    border-right: 1px solid #a6a7ac;
}
.formulaBar {
    height: 46px;
    padding-bottom: 2px;
    display: flex;
    align-items: center;
    padding-left: 10px;
}
.nameBox {
    width: 233px;
    margin-right: 13px;
}
.formulaInput {
    width: 709px;
    height: 33px;
    margin-left: 15px;
    border-top: 2px solid #1a1a1a;
    border-left: 2px solid #1a1a1a;
    border-right: 1px solid #a6a7ac;
    border-bottom: 2px solid #a6a7ac;
}
.sheet {
    padding-left: 2px;
    height: 928px;
}
.colHeads {
    height: 29px;
    display: flex;
    border-top: 2px solid #1a1a1a;
    border-bottom: 2px solid #1a1a1a;
}
.corner {
    width: 65px;
    flex: none;
    border-left: 1px solid #1a1a1a;
    border-right: 1px solid #1a1a1a;
}
.colHead {
    width: 170.3px;
    flex: none;
    text-align: center;
    line-height: 25px;
    border-right: 1.5px solid #1a1a1a;
}
.colHead.lastCol {
    width: 153px;
    padding-left: 17px;
    border-right: none;
}
.colHead.picked {
    background: linear-gradient(#4e52b2 50%, #00009a 50%);
    color: #d5d6dc;
    font-weight: bold;
}
.scrollUp {
    width: 23px;
    flex: none;
    position: relative;
    border-top: 4px solid #1a1a1a;
    border-right: 1px solid #a6a7ac;
    border-left: 1px solid #a6a7ac;
    border-bottom: 1px solid #a6a7ac;
}
.arrow {
    display: block;
    width: 0;
    height: 0;
    position: absolute;
    left: 5px;
    top: 8px;
}
.arrow.up {
    top: 6px;
    border-left: 6px solid transparent;
    border-right: 6px solid transparent;
    border-bottom: 6px solid #8d8e94;
}
.arrow.down {
    border-left: 6px solid transparent;
    border-right: 6px solid transparent;
    border-top: 6px solid #111;
}
.arrow.left {
    border-top: 6px solid transparent;
    border-bottom: 6px solid transparent;
    border-right: 6px solid #8d8e94;
}
.arrow.right {
    border-top: 6px solid transparent;
    border-bottom: 6px solid transparent;
    border-left: 6px solid #8d8e94;
}
.arrow.right.dark {
    border-left-color: #111;
}
.arrow.barred::after {
    content: "";
    position: absolute;
    top: -6px;
    width: 2px;
    height: 12px;
    background-color: #8d8e94;
}
.arrow.left.barred::after {
    left: -8px;
}
.arrow.right.barred::after {
    left: 2px;
}
.sheetBody {
    height: 875px;
    display: flex;
    overflow: hidden;
}
.rowHeads {
    width: 65px;
    flex: none;
    border-left: 1px solid #1a1a1a;
    border-right: 1.5px solid #1a1a1a;
}
.rowHead {
    height: 32.8px;
    text-align: center;
    line-height: 32px;
    border-bottom: 1.4px solid #1a1a1a;
}
.rowHead.picked {
    background: linear-gradient(to right, #4e52b2 45%, #00009a 45%);
    color: #d5d6dc;
    font-weight: bold;
}
.cells {
    width: 1004px;
    flex: none;
    position: relative;
    background-image:
        repeating-linear-gradient(to right, transparent 0 168.9px, #a0a1a7 168.9px 170.3px),
        repeating-linear-gradient(to bottom, transparent 0 31.4px, #a0a1a7 31.4px 32.8px);
}
.cursor {
    position: absolute;
    left: -1px;
    top: -2px;
    width: 172px;
    height: 35px;
    border: 3px solid #0a0a0a;
    border-top-width: 1px;
    border-left-width: 1px;
}
.cursor i {
    position: absolute;
    right: -6px;
    bottom: -6px;
    width: 8px;
    height: 8px;
    background-color: #0a0a0a;
}
.vScroll {
    width: 23px;
    flex: none;
    display: flex;
    flex-direction: column;
    background-color: #b3b4b9;
}
.vThumb {
    height: 560px;
    background-color: #dfe1e7;
    border-left: 1px solid #a6a7ac;
}
.vDown {
    height: 23px;
    margin-top: auto;
    position: relative;
    background-color: #dfe1e7;
    border-left: 1px solid #a6a7ac;
    border-right: 2px solid #1a1a1a;
    border-bottom: 2px solid #1a1a1a;
}
.sheetFoot {
    height: 24px;
    display: flex;
    position: relative;
}
.tabNav {
    display: flex;
    width: 100px;
    flex: none;
    margin-left: 1px;
}
.tabNav span {
    width: 25px;
    position: relative;
    border: 1px solid #9a9ba0;
    border-bottom: 2px solid #1a1a1a;
    border-right: 2px solid #6e6f74;
}
.tabNav .arrow {
    left: 9px;
    top: 5px;
}
.tab {
    position: relative;
    width: 95px;
    flex: none;
    padding-right: 8px;
    text-align: center;
    line-height: 24px;
}
.tab svg {
    position: absolute;
    left: 0;
    top: 0;
    width: 100%;
    height: 100%;
    overflow: visible;
}
.tab span {
    position: relative;
}
.tab.current {
    width: 104px;
    padding-right: 0;
    font-weight: bold;
}
.tabRest {
    width: 17px;
    flex: none;
    border-top: 1.5px solid #111;
    border-right: 2px solid #111;
}
.splitter {
    width: 10px;
    flex: none;
    border-right: 1.5px solid #555;
    border-bottom: 2px solid #a6a7ac;
}
.hBtn {
    width: 23px;
    flex: none;
    position: relative;
    border: 1px solid #a6a7ac;
    border-bottom: 2px solid #6a6b70;
}
.hBtn .arrow {
    left: 7px;
    top: 5px;
}
.hBtn.end {
    width: 27px;
    border-right: 6px solid #0a0a0a;
}
.hThumb {
    width: 245px;
    flex: none;
    border-top: 1px solid #a6a7ac;
    border-right: 2px solid #1a1a1a;
    border-bottom: 2px solid #1a1a1a;
}
.hTrack {
    width: 349px;
    flex: none;
    background-color: #b3b4b9;
}

/* sidebar */
.sidebar {
    width: 493px;
    flex: none;
    display: flex;
    margin-left: 10px;
    border-left: 2px solid #6f7075;
    border-bottom: 2px solid #6f7075;
    height: 976px;
    padding-left: 5px;
}
.deck {
    width: 422px;
    flex: none;
    margin-top: 8px;
    height: 963px;
    border: 1px solid #d4d5db;
    position: relative;
}
.deckTitle {
    height: 40px;
    padding-left: 15px;
    font-weight: bold;
    line-height: 36px;
    letter-spacing: 0.1px;
    color: #1d1d1d;
    position: relative;
}
.deckClose {
    position: absolute;
    right: 4px;
    top: -8px;
    font-size: 19px;
    color: #333;
}
.secHead {
    height: 34px;
    display: flex;
    align-items: flex-end;
    padding-left: 28px;
    position: relative;
    font-weight: bold;
    font-size: 20.5px;
    line-height: 26px;
    white-space: nowrap;
    color: #222;
    background: linear-gradient(#d3d2d8 22px, transparent 22px);
}
.secHead .fold {
    position: absolute;
    left: 8px;
    bottom: 6px;
    width: 14px;
    height: 14px;
    border: 1px solid #3c5f80;
    font: normal 13px/12px "DejaVu Sans", sans-serif;
    text-align: center;
    color: #222;
}
.secHead .more {
    position: absolute;
    left: 398px;
    top: 5px;
    width: 17px;
    height: 16px;
    border: 1.2px solid #3d6aa2;
    border-top-width: 2px;
    background: radial-gradient(circle, #333 .7px, transparent 1px) center 8px / 3px 3px repeat-x;
}
.secHead.last {
    background: linear-gradient(#d3d2d8 22px, #dcdde3 22px);
    height: 42px;
    padding-bottom: 8px;
    margin-top: 20px;
    border-bottom: 1px solid #d4d5db;
}
.secHead.last .fold {
    bottom: 14px;
}
.secHead.short {
    margin-top: 14px;
}
.secHead.appearance {
    margin-top: 11px;
}
.panelRow {
    display: flex;
}
.fontRow {
    margin-top: 12px;
    margin-left: 11px;
    gap: 15px;
}
.sideFont {
    width: 291px;
}
.sideSize {
    width: 90px;
}
.btnBox {
    display: flex;
    flex: none;
    align-items: center;
    border: 1px solid #d0d1d7;
}
.btnBox svg {
    overflow: visible;
}
.aaRow {
    margin-top: 14px;
    margin-left: 150px;
}
.aaBox {
    width: 64px;
    height: 41px;
    justify-content: flex-end;
    padding-right: 6px;
}
.growBox {
    width: 76px;
    height: 41px;
    margin-left: 104px;
    justify-content: center;
    gap: 5px;
}
.colorRow {
    margin-top: 23px;
    margin-left: 136px;
}
.stubBox {
    width: 48px;
    height: 41px;
}
.fontColorBox {
    width: 58px;
    height: 41px;
    margin-left: 46px;
    padding-left: 6px;
}
.fontColorBox .dd {
    margin-left: 7px;
}
.valignRow {
    margin-top: 7px;
    margin-left: 230px;
}
.valignBox {
    width: 113px;
    height: 41px;
    justify-content: space-around;
    padding: 0 6px;
}
.alignMid {
    display: flex;
    margin-left: 118px;
    margin-top: 27px;
}
.indentEdge {
    width: 60px;
    height: 30px;
    margin-top: 27px;
    flex: none;
    border: 2px solid #1a1a1a;
}
.checks {
    margin-left: 31px;
}
.check {
    display: flex;
    align-items: center;
    height: 24px;
    gap: 8px;
    font-size: 19.4px;
}
.check + .check {
    margin-top: 16px;
}
.check.off {
    color: #8d8e94;
}
.check.off .cb {
    border-top-color: #333;
    border-left-color: #333;
}
.cb {
    width: 18px;
    height: 18px;
    flex: none;
    border-top: 2px solid #1a1a1a;
    border-left: 2px solid #1a1a1a;
    position: relative;
}
.cb.on::after {
    content: "";
    position: absolute;
    left: 4px;
    top: 1px;
    width: 6px;
    height: 11px;
    border-right: 3px solid #111;
    border-bottom: 3px solid #111;
    transform: rotate(40deg);
}
.degreeBox {
    width: 320px;
    margin-left: 55px;
    margin-top: 56px;
}
.degreeBox .comboText {
    padding-left: 84px;
}
.stacked {
    height: 24px;
    margin-top: 21px;
    margin-left: 164px;
    line-height: 24px;
    font-size: 19.4px;
}
.plainLabel {
    height: 24px;
    line-height: 24px;
    margin-left: 10px;
}
.bgLabel {
    margin-top: 11px;
}
.borderLabel {
    margin-top: 60px;
}
.borderRow {
    display: flex;
    margin-top: 3px;
    margin-left: 8px;
}
.gridBox {
    width: 100px;
    height: 83px;
    padding-left: 10px;
}
.gridBox .dd {
    margin-left: 6px;
}
.borderTools {
    margin-left: 39px;
    display: flex;
    flex-direction: column;
    gap: 19px;
}
.toolBox {
    width: 151px;
    height: 34px;
    padding-left: 10px;
}
.lineSample {
    width: 115px;
    height: 1.5px;
    background-color: #75767b;
    margin-right: 6px;
}
.toolBox svg {
    flex: none;
    margin-right: 2px;
}
.colorSample {
    width: 87px;
    height: 19px;
    border: 1.5px solid #9b9ca2;
    margin-right: 6px;
}
.gridCheck {
    margin-top: 22px;
    margin-left: 12px;
    color: #2c2c2c;
}
.sideTabs {
    flex: 1;
    display: flex;
    flex-direction: column;
    align-items: center;
    padding-top: 22px;
}
.sideMenu {
    margin-bottom: 28px;
}
.sideTab {
    width: 49px;
    height: 49px;
    flex: none;
    display: flex;
    align-items: center;
    justify-content: center;
    margin-bottom: 4px;
}
.sideTab.compass {
    margin-top: 4px;
}
.sideTab.picked {
    border: 1.5px solid #c6c7cd;
    border-radius: 5px;
}

/* bottom status */
.bottomBar {
    height: 38px;
    padding-top: 4px;
    display: flex;
    align-items: center;
    color: #2c2c2c;
}
.bottomBar > span {
    height: 28px;
    line-height: 28px;
    flex: none;
    border-right: 1.5px solid #75767b;
}
.cellA {
    width: 383px;
    padding-left: 16px;
}
.cellB {
    width: 339px;
    padding-left: 9px;
}
.cellC {
    width: 84px;
}
.cellD {
    width: 62px;
    padding-left: 8px;
}
.cellE {
    width: 27px;
}
.cellF {
    width: 45px;
}
.bottomBar .cellG {
    width: 343px;
    padding-left: 132px;
    border-right: 1.5px solid #75767b;
}
.bottomBar .cellH {
    width: 240px;
    display: flex;
    align-items: center;
    padding-left: 7px;
}
.zoomTrack {
    width: 167px;
    height: 2px;
    margin: 0 6px;
    position: relative;
    background-color: #75767b;
}
.zoomTrack i {
    position: absolute;
    left: 74px;
    top: -6px;
    width: 14px;
    height: 14px;
    border-radius: 50%;
    background-color: #5b8cb8;
    border: 1px solid #3a6a94;
}
.bottomBar .cellI {
    border: none;
    padding-left: 4px;
}

/* dimmed modal */
.dimmer {
    position: fixed;
    left: 0;
    top: 0;
    right: 0;
    bottom: 0;
    z-index: 2;
    display: flex;
    align-items: center;
    justify-content: center;
    background-color: rgba(0, 0, 0, 0.4);
}
.dialog {
    width: 976px;
    height: 610px;
    overflow: hidden;
    background-color: #fff;
    border-radius: 20px;
    font-family: Inter, sans-serif;
    color: #000;
}
.dialogHead {
    height: 68.5px;
    display: flex;
    align-items: center;
    justify-content: space-between;
    padding: 0 35px 1px 32px;
    border-bottom: 1px solid #bcbbc1;
    position: relative;
    font-size: 26px;
}
.action {
    color: #007aff;
    font-weight: 500;
}
.dialogTitle {
    position: absolute;
    left: 0;
    right: 0;
    text-align: center;
    font-weight: 600;
}
.menu {
    margin: 0;
    padding: 0 0 0 24px;
    list-style: none;
}
.menu li {
    height: 68.75px;
    display: flex;
    align-items: center;
    justify-content: space-between;
    padding-right: 23px;
    border-bottom: 1px solid #c8c7cc;
    font-size: 25.2px;
}
.menu svg {
    width: 14px;
    height: 22px;
}
```
